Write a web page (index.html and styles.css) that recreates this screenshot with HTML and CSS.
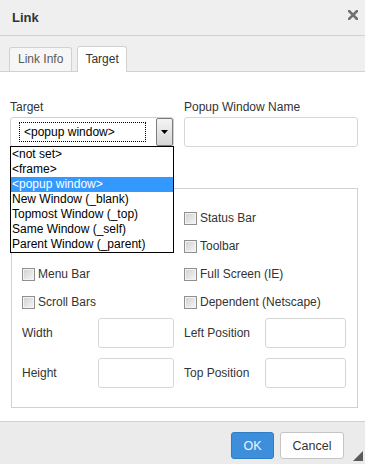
FILE: index.html
```html
<!DOCTYPE html>
<html>
<head>
<meta charset="utf-8">
<link rel="stylesheet" href="styles.css">
</head>
<body>
<div class="dialog">
  <div class="titlebar">
    <span class="title">Link</span>
    <svg class="close" width="10" height="10" viewBox="0 0 10 10"><path d="M1 1 L9 9 M9 1 L1 9" stroke="#707070" stroke-width="2.6" stroke-linecap="square"/></svg>
  </div>
  <div class="tabs">
    <div class="tab">Link Info</div>
    <div class="tab active">Target</div>
  </div>
  <div class="body">
    <div class="toprow">
      <div class="field">
        <div class="label">Target</div>
        <div class="select">
          <div class="select-face"><span class="focus">&lt;popup window&gt;</span></div>
          <div class="select-btn"><svg width="7" height="4" viewBox="0 0 7 4"><polygon points="0,0 7,0 3.5,4" fill="#000"/></svg></div>
          <ul class="options">
            <li>&lt;not set&gt;</li>
            <li>&lt;frame&gt;</li>
            <li class="sel">&lt;popup window&gt;</li>
            <li>New Window (_blank)</li>
            <li>Topmost Window (_top)</li>
            <li>Same Window (_self)</li>
            <li>Parent Window (_parent)</li>
          </ul>
        </div>
      </div>
      <div class="field">
        <div class="label">Popup Window Name</div>
        <div class="input"></div>
      </div>
    </div>
    <fieldset class="features">
      <div class="checks">
        <div class="check occluded"><span class="box"></span>Resizable</div>
        <div class="check"><span class="box"></span>Status Bar</div>
        <div class="check occluded"><span class="box"></span>Location Bar</div>
        <div class="check"><span class="box"></span>Toolbar</div>
        <div class="check"><span class="box"></span>Menu Bar</div>
        <div class="check"><span class="box"></span>Full Screen (IE)</div>
        <div class="check"><span class="box"></span>Scroll Bars</div>
        <div class="check"><span class="box"></span>Dependent (Netscape)</div>
      </div>
      <div class="sizes">
        <div class="size"><span class="size-label">Width</span><span class="input"></span></div>
        <div class="size"><span class="size-label">Left Position</span><span class="input"></span></div>
        <div class="size"><span class="size-label">Height</span><span class="input"></span></div>
        <div class="size"><span class="size-label">Top Position</span><span class="input"></span></div>
      </div>
    </fieldset>
  </div>
  <div class="footer">
    <button class="btn ok">OK</button>
    <button class="btn cancel">Cancel</button>
    <svg class="grip" width="10" height="10" viewBox="0 0 10 10"><polygon points="10,0 10,10 0,10" fill="#5a5a5a"/></svg>
  </div>
</div>
</body>
</html>
```

FILE: styles.css
```css
html, body {
  margin: 0;
  padding: 0;
}
body {
  width: 365px;
  height: 464px;
  overflow: hidden;
  font-family: "Liberation Sans", Arial, sans-serif;
  font-size: 12px;
  color: #333;
  background: #fff;
}
.dialog {
  display: flex;
  flex-direction: column;
  height: 464px;
}
.titlebar {
  height: 35px;
  flex: 0 0 35px;
  background: #efefef;
  border-bottom: 1px solid #d1d1d1;
  display: flex;
  justify-content: space-between;
  padding: 0 7px 0 12px;
}
.title {
  font-size: 13px;
  font-weight: bold;
  line-height: 35px;
  color: #333;
}
.close {
  margin-top: 10px;
}
.tabs {
  height: 35px;
  flex: 0 0 35px;
  background: #efefef;
  border-bottom: 1px solid #d1d1d1;
  display: flex;
  align-items: flex-end;
  gap: 5px;
  padding-left: 9px;
}
.tab {
  box-sizing: border-box;
  height: 24px;
  line-height: 22px;
  padding: 0 8px;
  border: 1px solid #d1d1d1;
  border-bottom: none;
  border-radius: 3px 3px 0 0;
  background: #f6f6f6;
  color: #595959;
}
.tab.active {
  height: 26px;
  line-height: 25px;
  margin-bottom: -1px;
  padding: 0 7px;
  background: #fff;
  color: #333;
}
.body {
  flex: 1;
  padding: 27px 7px 0 10px;
}
.toprow {
  display: grid;
  grid-template-columns: 164px 174px;
  column-gap: 10px;
}
.label {
  line-height: 16px;
  margin-bottom: 2px;
}
.input {
  display: block;
  box-sizing: border-box;
  height: 30px;
  border: 1px solid #d6d6d6;
  border-radius: 3px;
  background: #fff;
}
.select {
  position: relative;
  box-sizing: border-box;
  height: 30px;
  border: 1px solid #d1d1d1;
  border-radius: 3px;
  display: flex;
}
.select-face {
  flex: 1;
  padding: 4px 0 0 8px;
}
.focus {
  display: block;
  box-sizing: border-box;
  width: 127px;
  height: 20px;
  border: 1px dotted #000;
  padding-left: 4px;
  line-height: 18px;
  color: #000;
}
.select-btn {
  box-sizing: border-box;
  width: 17px;
  border: 1px solid #7c7c7c;
  border-radius: 2px;
  background: linear-gradient(#f4f4f4, #d6d6d6);
  display: flex;
  align-items: center;
  justify-content: center;
}
.options {
  position: absolute;
  z-index: 5;
  left: -1px;
  top: 100%;
  width: 164px;
  box-sizing: border-box;
  margin: 0;
  padding: 0;
  list-style: none;
  border: 1px solid #000;
  background: #fff;
}
.options li {
  height: 15px;
  line-height: 15px;
  padding-left: 1px;
  color: #000;
  white-space: nowrap;
}
.options li.sel {
  background: #3399ff;
  color: #fff;
}
.features {
  margin: 41px 0 0 1px;
  padding: 22px 10px 19px 10px;
  border: 1px solid #d1d1d1;
  min-width: 0;
}
.checks {
  display: grid;
  grid-template-columns: 152px 162px;
  column-gap: 10px;
  row-gap: 13px;
}
.check {
  display: flex;
  align-items: center;
  gap: 3px;
  height: 15px;
  line-height: 15px;
  white-space: nowrap;
}
.check.occluded {
  visibility: hidden;
}
.box {
  box-sizing: border-box;
  width: 13px;
  height: 13px;
  flex: 0 0 13px;
  border: 1px solid #8f8f8f;
  box-shadow: inset 0 0 0 1px #f3f3f3;
  background: linear-gradient(135deg, #cfcfcf, #f7f7f7);
}
.sizes {
  display: grid;
  grid-template-columns: 152px 162px;
  column-gap: 10px;
  row-gap: 10px;
  margin-top: 8px;
}
.size {
  display: grid;
  grid-template-columns: 1fr 1fr;
  align-items: center;
}
.size-label {
  line-height: 30px;
  white-space: nowrap;
}
.footer {
  position: relative;
  flex: 0 0 43px;
  box-sizing: border-box;
  background: #ebebeb;
  border-top: 1px solid #d1d1d1;
  display: flex;
  justify-content: flex-end;
  align-items: flex-start;
  gap: 6px;
  padding: 10px 21px 0 0;
}
.btn {
  box-sizing: border-box;
  height: 27px;
  margin: 0;
  border-radius: 3px;
  font-family: "Liberation Sans", Arial, sans-serif;
  font-size: 12.5px;
  padding: 0;
  cursor: pointer;
}
.btn.ok {
  width: 43px;
  background: #3e8fdb;
  border: 1px solid #2f7cc7;
  color: #eef5fc;
}
.btn.cancel {
  width: 64px;
  background: #fff;
  border: 1px solid #c4c4c4;
  color: #333;
}
.grip {
  position: absolute;
  right: 2px;
  bottom: 3px;
}
```
